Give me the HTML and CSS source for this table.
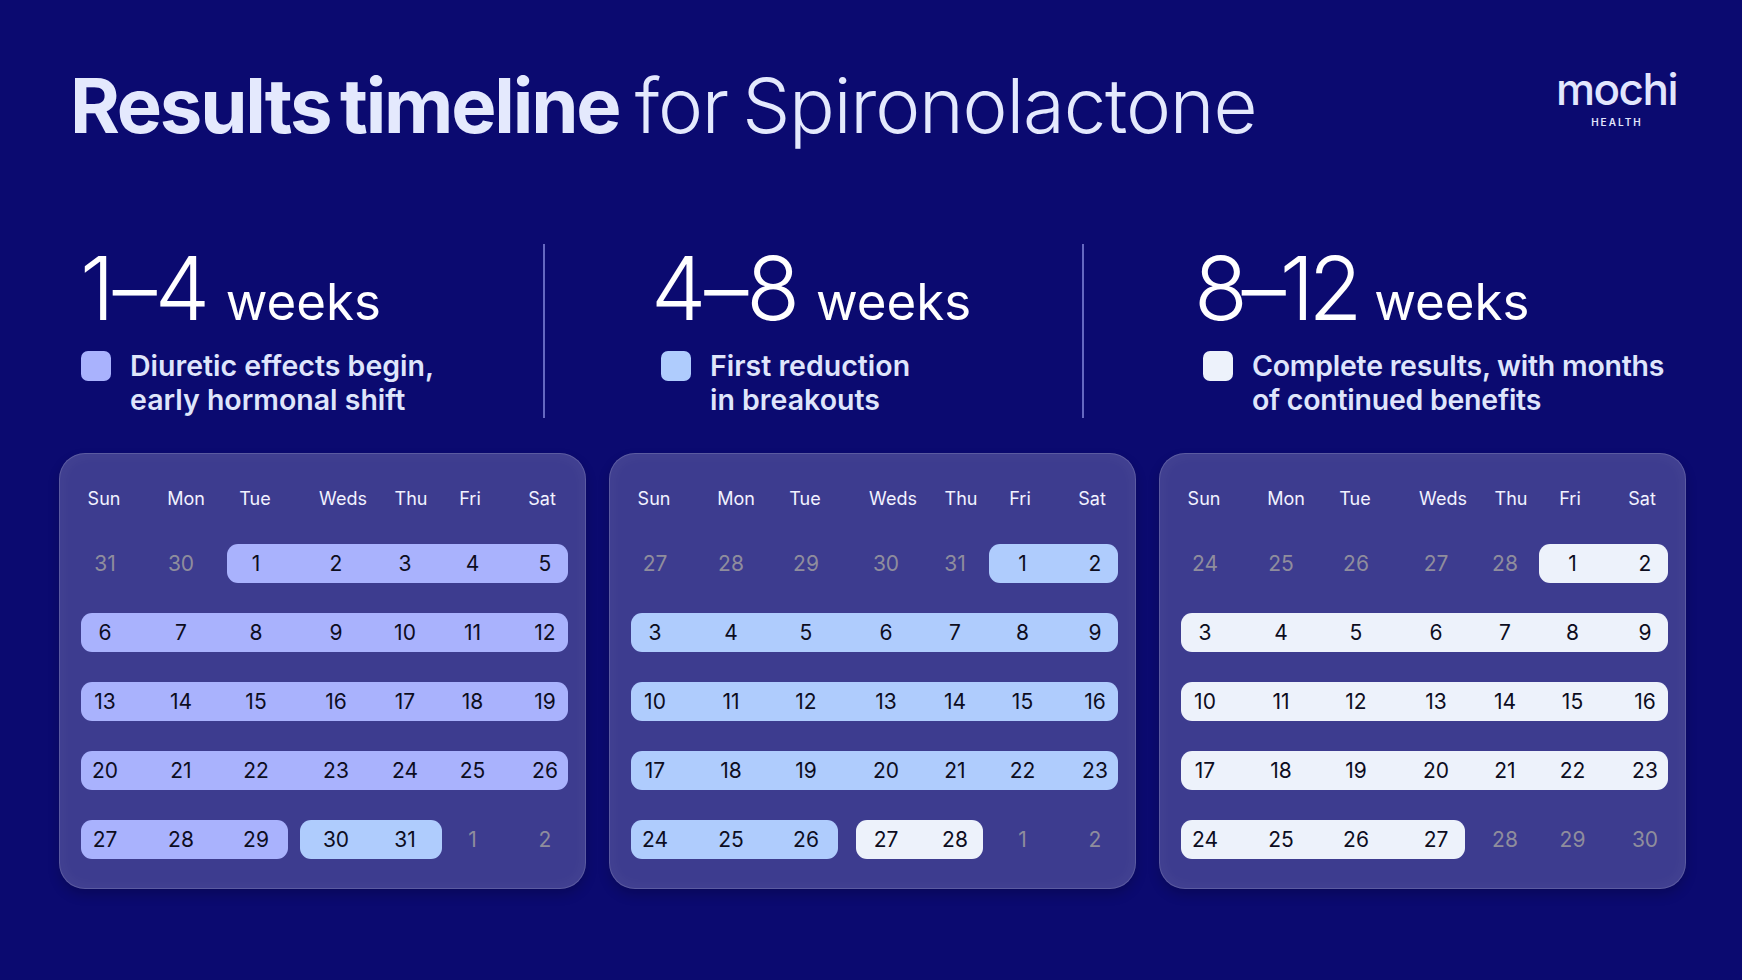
FILE: index.html
```html
<!DOCTYPE html>
<html lang="en">
<head>
<meta charset="utf-8">
<title>Results timeline for Spironolactone</title>
<link rel="stylesheet" href="styles.css">
</head>
<body>
<header class="header">
  <h1 class="title"><b>Results timeline</b> <span class="light">for Spironolactone</span></h1>
  <div class="logo">
    <span class="logo-word">mochi</span>
    <span class="logo-sub">HEALTH</span>
  </div>
</header>

<section class="stats">
  <div class="stat stat1">
    <h2 class="range">1–4 <span class="unit">weeks</span></h2>
    <div class="legend"><span class="sq c1"></span><p>Diuretic effects begin,<br>early hormonal shift</p></div>
  </div>
  <div class="stat stat2">
    <h2 class="range">4–8 <span class="unit">weeks</span></h2>
    <div class="legend"><span class="sq c2"></span><p>First reduction<br>in breakouts</p></div>
  </div>
  <div class="stat stat3">
    <h2 class="range"><span class="tight">8–12</span> <span class="unit">weeks</span></h2>
    <div class="legend"><span class="sq c3"></span><p class="narrow">Complete results, with months<br>of continued benefits</p></div>
  </div>
</section>

<section class="cards">
  <div class="card">
    <div class="dow"><span>Sun</span><span>Mon</span><span>Tue</span><span>Weds</span><span>Thu</span><span>Fri</span><span>Sat</span></div>
    <div class="weeks">
      <div class="week"><div class="pill c1 s3 e8"></div><span class="o">31</span><span class="o">30</span><span>1</span><span>2</span><span>3</span><span>4</span><span>5</span></div>
      <div class="week"><div class="pill c1 s1 e8"></div><span>6</span><span>7</span><span>8</span><span>9</span><span>10</span><span>11</span><span>12</span></div>
      <div class="week"><div class="pill c1 s1 e8"></div><span>13</span><span>14</span><span>15</span><span>16</span><span>17</span><span>18</span><span>19</span></div>
      <div class="week"><div class="pill c1 s1 e8"></div><span>20</span><span>21</span><span>22</span><span>23</span><span>24</span><span>25</span><span>26</span></div>
      <div class="week"><div class="pill c1 s1 e4 gr"></div><div class="pill c2 s4 e6 gl"></div><span>27</span><span>28</span><span>29</span><span>30</span><span>31</span><span class="o">1</span><span class="o">2</span></div>
    </div>
  </div>

  <div class="card">
    <div class="dow"><span>Sun</span><span>Mon</span><span>Tue</span><span>Weds</span><span>Thu</span><span>Fri</span><span>Sat</span></div>
    <div class="weeks">
      <div class="week"><div class="pill c2 s6 e8"></div><span class="o">27</span><span class="o">28</span><span class="o">29</span><span class="o">30</span><span class="o">31</span><span>1</span><span>2</span></div>
      <div class="week"><div class="pill c2 s1 e8"></div><span>3</span><span>4</span><span>5</span><span>6</span><span>7</span><span>8</span><span>9</span></div>
      <div class="week"><div class="pill c2 s1 e8"></div><span>10</span><span>11</span><span>12</span><span>13</span><span>14</span><span>15</span><span>16</span></div>
      <div class="week"><div class="pill c2 s1 e8"></div><span>17</span><span>18</span><span>19</span><span>20</span><span>21</span><span>22</span><span>23</span></div>
      <div class="week"><div class="pill c2 s1 e4 gr"></div><div class="pill c3 s4 e6 gl2"></div><span>24</span><span>25</span><span>26</span><span>27</span><span>28</span><span class="o">1</span><span class="o">2</span></div>
    </div>
  </div>

  <div class="card">
    <div class="dow"><span>Sun</span><span>Mon</span><span>Tue</span><span>Weds</span><span>Thu</span><span>Fri</span><span>Sat</span></div>
    <div class="weeks">
      <div class="week"><div class="pill c3 s6 e8"></div><span class="o">24</span><span class="o">25</span><span class="o">26</span><span class="o">27</span><span class="o">28</span><span>1</span><span>2</span></div>
      <div class="week"><div class="pill c3 s1 e8"></div><span>3</span><span>4</span><span>5</span><span>6</span><span>7</span><span>8</span><span>9</span></div>
      <div class="week"><div class="pill c3 s1 e8"></div><span>10</span><span>11</span><span>12</span><span>13</span><span>14</span><span>15</span><span>16</span></div>
      <div class="week"><div class="pill c3 s1 e8"></div><span>17</span><span>18</span><span>19</span><span>20</span><span>21</span><span>22</span><span>23</span></div>
      <div class="week"><div class="pill c3 s1 e5"></div><span>24</span><span>25</span><span>26</span><span>27</span><span class="o">28</span><span class="o">29</span><span class="o">30</span></div>
    </div>
  </div>
</section>
</body>
</html>
```

FILE: styles.css
```css
html, body {
  margin: 0;
  padding: 0;
}
body {
  width: 1742px;
  height: 980px;
  overflow: hidden;
  background: #0b0a70;
  font-family: Inter, "Noto Sans", "Liberation Sans", sans-serif;
}

/* Header */
.header {
  display: flex;
  justify-content: space-between;
  align-items: flex-start;
  padding: 67px 65px 0 70px;
}
.title {
  margin: 0;
  font-size: 76px;
  line-height: 1;
  font-weight: 300;
  color: #e4e9fd;
  white-space: nowrap;
  word-spacing: -6px;
}
.title b {
  font-weight: 700;
  letter-spacing: -2.2px;
}
.title .light {
  letter-spacing: -1.15px;
}
.logo {
  display: flex;
  flex-direction: column;
  align-items: center;
  margin-top: 2px;
  color: #e2e6fd;
}
.logo-word {
  font-size: 44px;
  font-weight: 500;
  line-height: 40px;
  letter-spacing: -1.5px;
  padding-left: 1px;
}
.logo-sub {
  font-size: 10px;
  font-weight: 600;
  line-height: 12px;
  letter-spacing: 2px;
  margin-top: 7px;
  padding-left: 2px;
}

/* Stats */
.stats {
  display: flex;
  margin-top: 101px;
  padding-left: 81px;
  height: 174px;
}
.stat {
  flex: none;
  box-sizing: border-box;
}
.stat1 {
  width: 462px;
}
.stat2 {
  width: 539px;
  border-left: 2px solid rgba(150, 155, 235, 0.65);
  padding-left: 116px;
}
.stat3 {
  border-left: 2px solid rgba(150, 155, 235, 0.65);
  padding-left: 119px;
}
.range {
  margin: 0;
  font-size: 88px;
  line-height: 1;
  font-weight: 300;
  color: #ffffff;
  letter-spacing: -2px;
  word-spacing: -5px;
  white-space: nowrap;
}
.stat1 .range { margin-left: -1px; }
.stat2 .range { margin-left: -10px; }
.stat3 .range { margin-left: -9px; }
.range .tight {
  letter-spacing: -6px;
}
.range .unit {
  font-size: 51px;
  font-weight: 400;
  letter-spacing: 0;
}
.legend {
  display: flex;
  gap: 19px;
  margin-top: 17px;
}
.sq {
  flex: none;
  width: 30px;
  height: 30px;
  border-radius: 7px;
  margin-top: 2px;
}
.legend p {
  margin: 0;
  font-size: 28.5px;
  line-height: 34px;
  font-weight: 600;
  color: #dfe5fb;
  white-space: nowrap;
}
.legend p.narrow {
  letter-spacing: -0.25px;
}

/* Colours */
.c1 { background: #a9b2fd; }
.c2 { background: #afccfd; }
.c3 { background: #edf2fb; }

/* Cards */
.cards {
  display: flex;
  gap: 23px;
  padding-left: 59px;
  margin-top: 35px;
}
.card {
  flex: none;
  width: 527px;
  height: 436px;
  box-sizing: border-box;
  padding: 34px 18px 30px 22px;
  border-radius: 26px;
  background: #3d3c8f;
  box-shadow:
    inset 0 0 0 1px rgba(255, 255, 255, 0.14),
    inset 0 0 18px rgba(255, 255, 255, 0.05),
    0 6px 12px rgba(0, 0, 0, 0.18);
}
.dow,
.week {
  display: grid;
  grid-template-columns: 62px 78px 75px 75px 68px 67px 62px;
}
.dow {
  height: 24px;
  font-size: 18px;
  line-height: 24px;
  color: #f2f2ff;
  text-align: center;
}
.dow span:nth-child(1) { padding-right: 16px; }
.dow span:nth-child(2) { padding-left: 8px; }
.dow span:nth-child(3) { padding-right: 7px; }
.dow span:nth-child(4) { padding-left: 19px; }
.dow span:nth-child(5) { padding-left: 12px; }
.dow span:nth-child(6) { padding-right: 5px; }
.dow span:nth-child(7) { padding-left: 10px; }

.weeks {
  display: flex;
  flex-direction: column;
  gap: 30px;
  margin-top: 33px;
}
.week {
  height: 39px;
}
.week > * {
  grid-row: 1;
}
.week span {
  font-size: 21px;
  line-height: 39px;
  text-align: center;
  color: #0d0d1e;
}
.week span.o {
  color: #8f8d9d;
}
.week span:nth-of-type(1) { grid-column: 1; padding-right: 14px; }
.week span:nth-of-type(2) { grid-column: 2; padding-right: 2px; }
.week span:nth-of-type(3) { grid-column: 3; padding-right: 5px; }
.week span:nth-of-type(4) { grid-column: 4; padding-left: 5px; }
.week span:nth-of-type(5) { grid-column: 5; }
.week span:nth-of-type(6) { grid-column: 6; }
.week span:nth-of-type(7) { grid-column: 7; padding-left: 16px; }

.pill {
  border-radius: 11px;
}
.s1 { grid-column-start: 1; }
.s3 { grid-column-start: 3; margin-left: 6px; }
.s4 { grid-column-start: 4; }
.s6 { grid-column-start: 6; }
.e4 { grid-column-end: 4; }
.e5 { grid-column-end: 5; margin-right: 6px; }
.e6 { grid-column-end: 6; }
.e8 { grid-column-end: 8; }
.gr { margin-right: 8px; }
.gl { margin-left: 4px; margin-right: -3px; }
.gl2 { margin-left: 10px; margin-right: 6px; }
```
